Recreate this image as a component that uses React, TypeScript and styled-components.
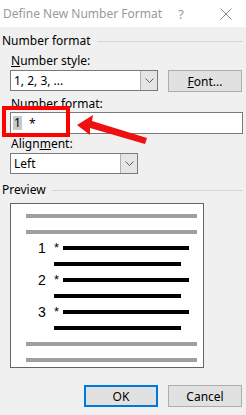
import React from "react";
import styled, { createGlobalStyle } from "styled-components";

const Global = createGlobalStyle`
  html, body { margin: 0; padding: 0; background: #f0f0f0; }
  body { font-family: "Noto Sans", "Open Sans", sans-serif; font-size: 12px; color: #000; }
`;

const Window = styled.div`
  position: relative;
  width: 246px;
  height: 415px;
  overflow: hidden;
  background: #f0f0f0;
  display: flex;
  flex-direction: column;
`;

const TitleBar = styled.div`
  height: 27px;
  background: #fff;
  display: flex;
  align-items: center;
  padding-left: 3px;
  color: #999;
  font-size: 12px;
`;

const TitleText = styled.div`
  flex: 1;
  min-width: 0;
  white-space: nowrap;
`;

const TitleBtn = styled.div<{ $w: number; $mr?: number }>`
  width: ${(p) => p.$w}px;
  flex: none;
  margin-right: ${(p) => p.$mr ?? 0}px;
  display: flex;
  justify-content: center;
  align-items: center;
  font-size: 13px;
  color: #999;
`;

const Body = styled.div`
  display: flex;
  flex-direction: column;
  padding: 6px 3px 0 2px;
`;

const GroupHead = styled.div<{ $mt?: number }>`
  margin-top: ${(p) => p.$mt ?? 0}px;
  height: 16px;
  display: flex;
  align-items: center;
  gap: 6px;
  line-height: 16px;
  &::after {
    content: "";
    flex: 1;
    height: 1px;
    background: #d5d5d5;
  }
`;

const Label = styled.div<{ $mt: number }>`
  margin: ${(p) => p.$mt}px 0 0 9px;
  height: 16px;
  line-height: 16px;
`;

const U = styled.span`
  text-decoration: underline;
`;

const Row = styled.div`
  display: flex;
  gap: 10px;
  margin: 1px 0 0 8px;
`;

const Combo = styled.div<{ $w: number }>`
  width: ${(p) => p.$w}px;
  height: 21px;
  box-sizing: border-box;
  border: 1px solid #7a7a7a;
  background: #fff;
  display: flex;
  align-items: stretch;
`;

const ComboText = styled.div`
  flex: 1;
  padding-left: 3px;
  line-height: 19px;
`;

const ComboBtn = styled.div`
  width: 16px;
  background: #e5e5e5;
  border-left: 1px solid #b0b0b0;
  display: flex;
  align-items: center;
  justify-content: center;
`;

const Button = styled.div<{ $primary?: boolean }>`
  width: 74px;
  height: 22px;
  box-sizing: border-box;
  background: #e1e1e1;
  border: ${(p) => (p.$primary ? "2px solid #0078d7" : "1px solid #adadad")};
  display: flex;
  align-items: center;
  justify-content: center;
`;

const TextInput = styled.div`
  margin: 0 0 0 8px;
  width: 233px;
  height: 22px;
  box-sizing: border-box;
  border: 1px solid #7a7a7a;
  background: #fff;
  display: flex;
  align-items: center;
  padding-left: 2px;
`;

const Sel = styled.span`
  background: #c8c8c8;
  padding: 0 1px;
  line-height: 14px;
`;

const Star = styled.span`
  margin-left: 7px;
`;

const PreviewBox = styled.div`
  margin: 5px 0 0 8px;
  width: 194px;
  height: 165px;
  box-sizing: border-box;
  border: 1px solid #646464;
  background: #fff;
  display: flex;
  flex-direction: column;
  padding: 10px 0 0 15px;
`;

const GrayBar = styled.div<{ $mt: number }>`
  margin-top: ${(p) => p.$mt}px;
  width: 171px;
  height: 4px;
  flex: none;
  background: #a0a0a0;
`;

const NumRow = styled.div`
  margin-top: 6px;
  height: 16px;
  display: flex;
  align-items: center;
  font-family: "Liberation Sans", Arial, sans-serif;
  font-size: 14px;
`;

const Digit = styled.span`
  margin-left: 12px;
  width: 16px;
`;

const PStar = styled.span`
  width: 9px;
  align-self: flex-start;
  font-size: 13px;
`;

const BlackBar = styled.div<{ $w: number; $ml: number }>`
  width: ${(p) => p.$w}px;
  margin-left: ${(p) => p.$ml}px;
  height: 4px;
  background: #000;
  flex: none;
`;

const WrapBar = styled(BlackBar)`
  margin-top: 6px;
`;

const Footer = styled.div`
  display: flex;
  justify-content: flex-end;
  gap: 10px;
  margin: 17px 1px 0 0;
`;

const Annot = styled.svg`
  position: absolute;
  left: 0;
  top: 0;
  pointer-events: none;
`;

const Chevron = () => (
  <svg width="9" height="5" viewBox="0 0 9 5">
    <path d="M0.5 0.5 L4.5 4.5 L8.5 0.5" fill="none" stroke="#606060" strokeWidth="1" />
  </svg>
);

const CloseIcon = () => (
  <svg width="12" height="12" viewBox="0 0 12 12">
    <path d="M0.5 0.5 L11.5 11.5 M11.5 0.5 L0.5 11.5" fill="none" stroke="#8a8a8a" strokeWidth="1" />
  </svg>
);

const items = ["1", "2", "3"];

export default function App() {
  return (
    <>
      <Global />
      <Window>
        <TitleBar>
          <TitleText>Define New Number Format</TitleText>
          <TitleBtn $w={22} $mr={14}>?</TitleBtn>
          <TitleBtn $w={40}>
            <CloseIcon />
          </TitleBtn>
        </TitleBar>
        <Body>
          <GroupHead>Number format</GroupHead>
          <Label $mt={4}>
            <U>N</U>umber style:
          </Label>
          <Row>
            <Combo $w={148}>
              <ComboText>1, 2, 3, ...</ComboText>
              <ComboBtn>
                <Chevron />
              </ComboBtn>
            </Combo>
            <Button>
              <span>
                <U>F</U>ont...
              </span>
            </Button>
          </Row>
          <Label $mt={4}>Number format:</Label>
          <TextInput>
            <Sel>1</Sel>
            <Star>*</Star>
          </TextInput>
          <Label $mt={2}>
            Align<U>m</U>ent:
          </Label>
          <Row>
            <Combo $w={128}>
              <ComboText>Left</ComboText>
              <ComboBtn>
                <Chevron />
              </ComboBtn>
            </Combo>
          </Row>
          <GroupHead $mt={8}>Preview</GroupHead>
          <PreviewBox>
            <GrayBar $mt={0} />
            <GrayBar $mt={12} />
            {items.map((n) => (
              <React.Fragment key={n}>
                <NumRow>
                  <Digit>{n}</Digit>
                  <PStar>*</PStar>
                  <BlackBar $w={126} $ml={0} />
                </NumRow>
                <WrapBar $w={127} $ml={28} />
              </React.Fragment>
            ))}
            <GrayBar $mt={12} />
            <GrayBar $mt={12} />
          </PreviewBox>
          <Footer>
            <Button $primary>OK</Button>
            <Button>Cancel</Button>
          </Footer>
        </Body>
        <Annot width="246" height="415" viewBox="0 0 246 415">
          <rect x="4" y="108" width="64" height="27" fill="none" stroke="#ff0000" strokeWidth="4" />
          <polygon points="77,125 93,115 92,121 147,138 145,144 90,128 90,135" fill="#ee1111" />
        </Annot>
      </Window>
    </>
  );
}
